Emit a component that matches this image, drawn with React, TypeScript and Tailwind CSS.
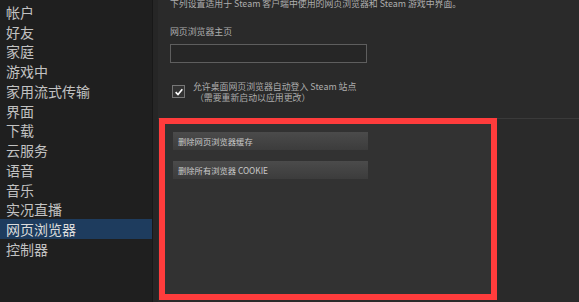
const NAV = [
  "帐户",
  "好友",
  "家庭",
  "游戏中",
  "家用流式传输",
  "界面",
  "下载",
  "云服务",
  "语音",
  "音乐",
  "实况直播",
  "网页浏览器",
  "控制器",
];

const FONT = "font-['Noto_Sans_CJK_SC','Noto_Sans',sans-serif]";

function Button({ label }: { label: string }) {
  return (
    <div className="flex h-[18px] w-[195px] items-center bg-gradient-to-b from-[#4b4b4b] to-[#3c3c3c] px-[5px] text-[8.3px] leading-none text-[#c9c9c9]">
      {label}
    </div>
  );
}

export default function App() {
  return (
    <div className={`flex h-[302px] w-[579px] overflow-hidden bg-[#2a2a2a] ${FONT}`}>
      <nav className="flex w-[152px] flex-none flex-col bg-[#1f1f1f] pt-[2px]">
        {NAV.map((item) => (
          <div
            key={item}
            className={`flex h-[19.75px] items-center pl-[6px] text-[14px] leading-none ${
              item === "网页浏览器" ? "bg-[#1e3c5e] text-[#dcdcdc]" : "text-[#c2c2c2]"
            }`}
          >
            {item}
          </div>
        ))}
      </nav>
      <div className="w-[6px] flex-none border-l border-[#181818] bg-[#262626]" />
      <main className="flex flex-1 flex-col">
        <section className="flex h-[118px] flex-none flex-col pl-[12px] text-[8.9px] text-[#adadad]">
          <p className="mt-[-2px] leading-[11px] whitespace-nowrap">
            下列设置适用于 Steam 客户端中使用的网页浏览器和 Steam 游戏中界面。
          </p>
          <label className="mt-[17px] leading-[11px]">网页浏览器主页</label>
          <div className="mt-[7px] h-[19px] w-[197px] border border-[#5e5e5e] bg-[#262626]" />
          <div className="mt-[18px] flex items-start gap-[8px] pl-[2px]">
            <div className="mt-[4px] flex h-[13px] w-[13px] items-center justify-center border border-[#777] bg-[#333]">
              <svg viewBox="0 0 12 12" className="h-[10px] w-[10px]">
                <path d="M2 6.2 L4.8 9 L10 2.8" fill="none" stroke="#fff" strokeWidth="2" />
              </svg>
            </div>
            <div className="leading-[11px]">
              <div>允许桌面网页浏览器自动登入 Steam 站点</div>
              <div className="pl-[2px]">（需要重新启动以应用更改）</div>
            </div>
          </div>
        </section>
        <div className="h-px flex-none bg-[#3a3a3a]" />
        <section className="flex flex-1 pl-px">
          <div className="-mt-px flex h-[182px] w-[338px] flex-col gap-[11px] border-[6px] border-[#ff3c3c] bg-[#323232] pt-[8px] pl-[8px]">
            <Button label="删除网页浏览器缓存" />
            <Button label="删除所有浏览器 COOKIE" />
          </div>
        </section>
      </main>
    </div>
  );
}
